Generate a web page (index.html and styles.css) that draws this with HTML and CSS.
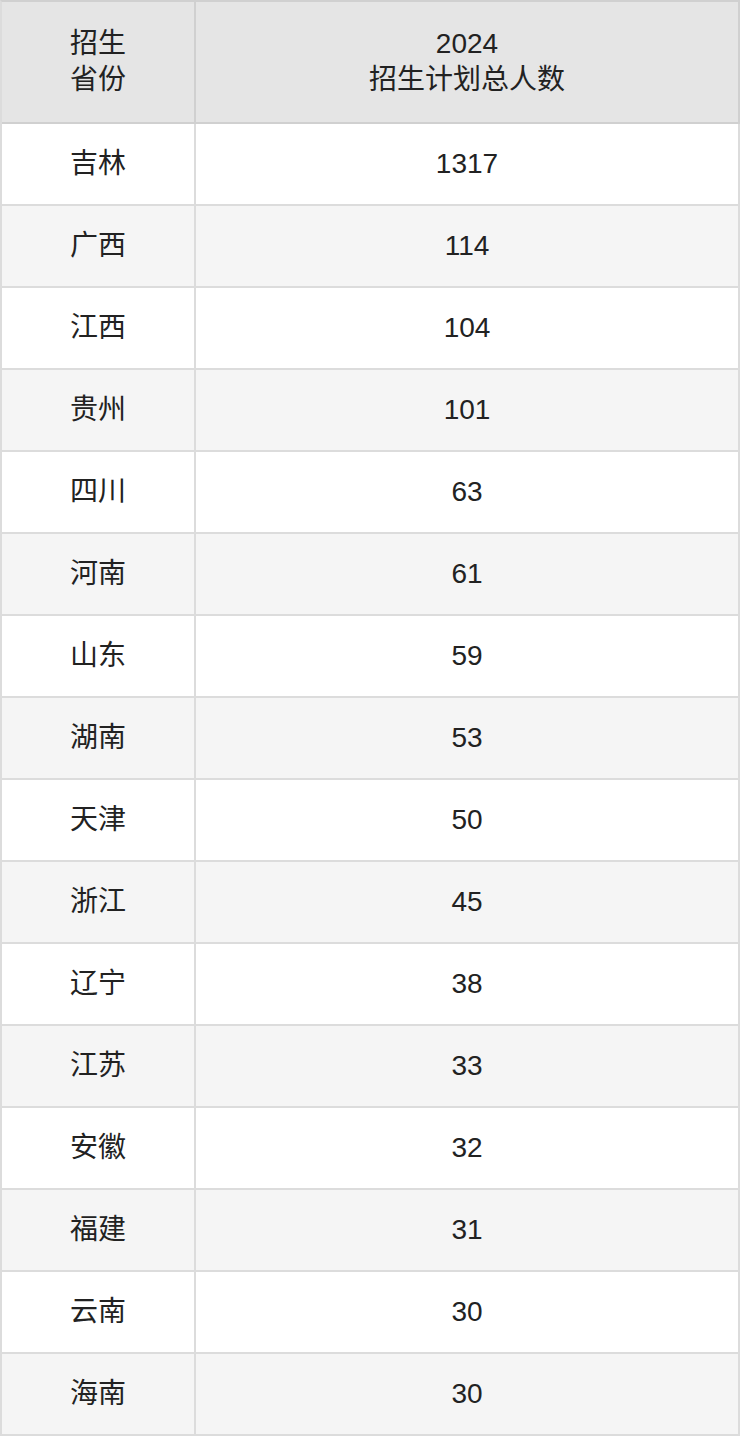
FILE: index.html
```html
<!DOCTYPE html>
<html lang="zh-CN">
<head>
<meta charset="utf-8">
<title>招生计划</title>
<link rel="stylesheet" href="styles.css">
</head>
<body>
<table class="plan">
  <colgroup>
    <col class="col-prov">
    <col class="col-num">
  </colgroup>
  <thead>
    <tr>
      <th>招生<br>省份</th>
      <th>2024<br>招生计划总人数</th>
    </tr>
  </thead>
  <tbody>
    <tr><td>吉林</td><td>1317</td></tr>
    <tr><td>广西</td><td>114</td></tr>
    <tr><td>江西</td><td>104</td></tr>
    <tr><td>贵州</td><td>101</td></tr>
    <tr><td>四川</td><td>63</td></tr>
    <tr><td>河南</td><td>61</td></tr>
    <tr><td>山东</td><td>59</td></tr>
    <tr><td>湖南</td><td>53</td></tr>
    <tr><td>天津</td><td>50</td></tr>
    <tr><td>浙江</td><td>45</td></tr>
    <tr><td>辽宁</td><td>38</td></tr>
    <tr><td>江苏</td><td>33</td></tr>
    <tr><td>安徽</td><td>32</td></tr>
    <tr><td>福建</td><td>31</td></tr>
    <tr><td>云南</td><td>30</td></tr>
    <tr><td>海南</td><td>30</td></tr>
  </tbody>
</table>
</body>
</html>
```

FILE: styles.css
```css
html, body {
  margin: 0;
  padding: 0;
  background: #ffffff;
}

.plan {
  width: 740px;
  table-layout: fixed;
  border-collapse: separate;
  border-spacing: 0;
  border-top: 2px solid #d0d0d0;
  border-left: 2px solid #dcdcdc;
  font-family: "Liberation Sans", "Noto Sans CJK SC", sans-serif;
  font-size: 28px;
  line-height: 36px;
  color: #222222;
}

.col-prov { width: 194px; }
.col-num { width: 544px; }

.plan th,
.plan td {
  text-align: center;
  vertical-align: middle;
  font-weight: normal;
  border-right: 2px solid #dcdcdc;
  border-bottom: 2px solid #dcdcdc;
}

.plan th {
  background: #e5e5e5;
  padding: 24px 0;
  border-right-color: #d0d0d0;
  border-bottom-color: #d0d0d0;
}

.plan td {
  padding: 22px 0;
  background: #ffffff;
}

.plan tbody tr:nth-child(even) td {
  background: #f5f5f5;
}
```
